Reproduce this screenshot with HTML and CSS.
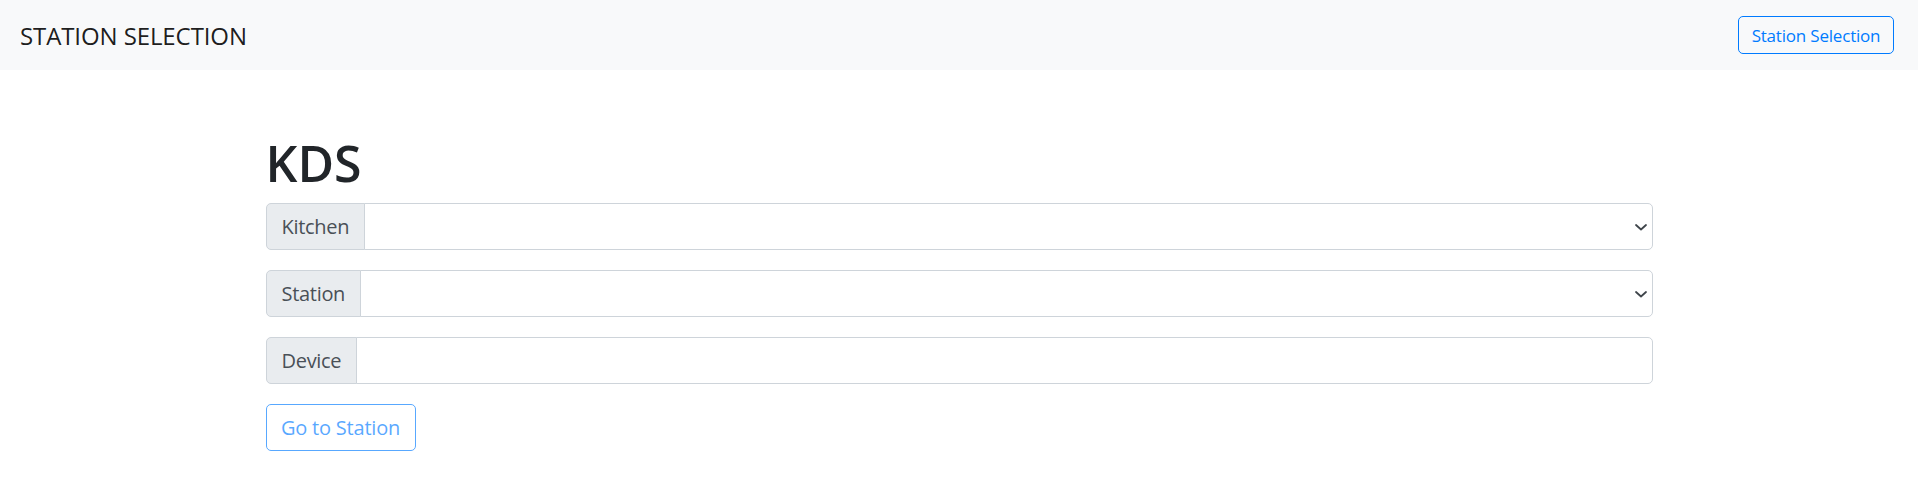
FILE: index.html
```html
<!DOCTYPE html>
<html lang="en">
<head>
<meta charset="utf-8">
<title>Station Selection</title>
<link rel="stylesheet" href="styles.css">
</head>
<body>
<nav class="navbar">
  <span class="brand">STATION SELECTION</span>
  <button class="btn btn-outline btn-sm" type="button">Station Selection</button>
</nav>
<main class="container">
  <h1 class="title">KDS</h1>
  <div class="input-group">
    <span class="group-label">Kitchen</span>
    <div class="select-wrap">
      <select class="field select"><option></option></select>
      <svg class="chevron" width="12" height="7" viewBox="0 0 12 7" aria-hidden="true"><path d="M1 1l5 4.5L11 1" fill="none" stroke="#3f454b" stroke-width="1.8" stroke-linecap="round" stroke-linejoin="round"/></svg>
    </div>
  </div>
  <div class="input-group">
    <span class="group-label">Station</span>
    <div class="select-wrap">
      <select class="field select"><option></option></select>
      <svg class="chevron" width="12" height="7" viewBox="0 0 12 7" aria-hidden="true"><path d="M1 1l5 4.5L11 1" fill="none" stroke="#3f454b" stroke-width="1.8" stroke-linecap="round" stroke-linejoin="round"/></svg>
    </div>
  </div>
  <div class="input-group">
    <span class="group-label">Device</span>
    <input class="field input" type="text">
  </div>
  <button class="btn btn-outline btn-disabled" type="button" disabled>Go to Station</button>
</main>
</body>
</html>
```
FILE: styles.css
```css
* { box-sizing: border-box; }
html, body { margin: 0; padding: 0; }
body {
  font-family: "Open Sans", "Noto Sans", "Liberation Sans", sans-serif;
  font-size: 20px;
  color: #212529;
  background: #fff;
}
.navbar {
  height: 70px;
  background: #f8f9fa;
  display: flex;
  align-items: center;
  justify-content: space-between;
  padding: 0 24px 0 20px;
}
.brand {
  font-size: 24px;
  color: rgba(0,0,0,0.9);
  letter-spacing: -0.1px;
}
.btn {
  font-family: inherit;
  background: transparent;
  border: 1px solid #007bff;
  color: #007bff;
  border-radius: 5px;
  font-size: 20px;
  line-height: 1.5;
  padding: 6.5px 15px;
  cursor: pointer;
}
.btn-sm {
  font-size: 17px;
  padding: 4px 10px;
  height: 38px;
  width: 156px;
  line-height: 1;
  letter-spacing: -0.2px;
}
.btn-disabled {
  opacity: 0.65;
  height: 47px;
  width: 150px;
  padding: 0;
  letter-spacing: -0.2px;
}
.container {
  width: 1387px;
  margin: 0 auto;
  padding-top: 63px;
}
.title {
  font-size: 50px;
  font-weight: 600;
  line-height: 60px;
  margin: 0 0 10px;
  color: #212529;
}
.input-group {
  display: flex;
  height: 47px;
  margin-bottom: 20px;
}
.group-label {
  display: flex;
  align-items: center;
  padding: 0 15px;
  background: #e9ecef;
  border: 1px solid #ced4da;
  border-radius: 5px 0 0 5px;
  color: #495057;
  font-size: 20px;
  letter-spacing: -0.3px;
}
.select-wrap {
  position: relative;
  flex: 1;
  display: flex;
}
.field {
  flex: 1;
  height: 100%;
  margin-left: -1px;
  border: 1px solid #ced4da;
  border-radius: 0 5px 5px 0;
  background: #fff;
  font: inherit;
  color: #495057;
  padding: 0 15px;
  outline: none;
}
.select {
  appearance: none;
  -webkit-appearance: none;
}
.chevron {
  position: absolute;
  right: 6px;
  top: 50%;
  margin-top: -3px;
  pointer-events: none;
}
```
